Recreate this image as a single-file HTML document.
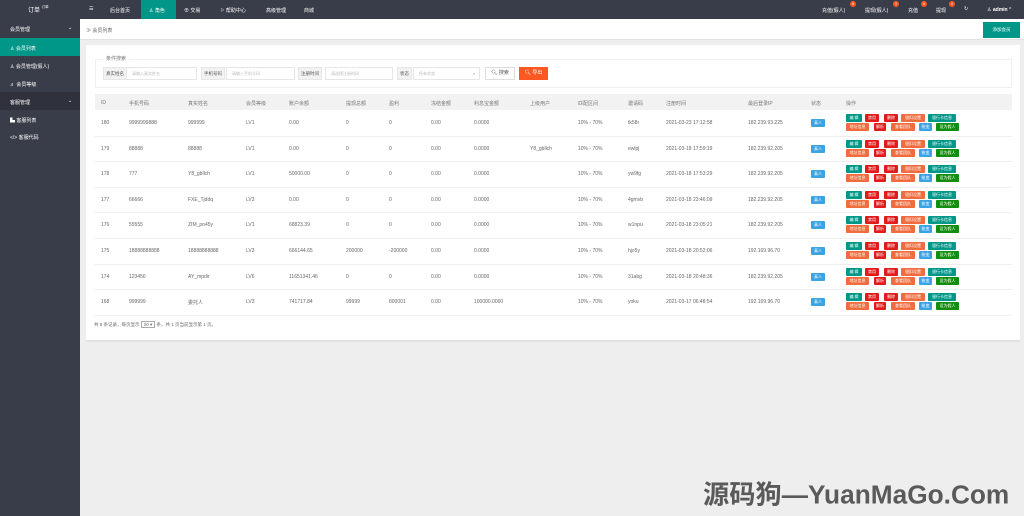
<!DOCTYPE html><html><head><meta charset="utf-8"><style>
*{margin:0;padding:0;box-sizing:border-box}
body{width:1024px;height:516px;overflow:hidden;background:#eeeeee;font-family:"Liberation Sans","Noto Sans CJK SC",sans-serif;font-size:5px;color:#666;position:relative}
.a{position:absolute;white-space:nowrap}
.top{left:0;top:0;width:1024px;height:19px;background:#393d49}
.side{left:0;top:19px;width:80px;height:497px;background:#393d49}
.tw{color:#fff;font-size:5px}
.badge{position:absolute;width:6px;height:6px;border-radius:3px;background:#ff5722;color:#fff;font-size:3.5px;text-align:center;line-height:6px}
.lbl{background:#f2f2f2;border:1px solid #e6e6e6;color:#555;height:13px;line-height:11px;padding:0 2px;font-size:4.5px}
.inp{border:1px solid #e6e6e6;background:#fff;height:13px;line-height:11px;padding-left:5px;color:#bbb;font-size:4px}
.b{position:absolute;height:8px;line-height:8px;color:#fff;font-size:4px;text-align:center;border-radius:1px}
.t{background:#009688}.r{background:#e01b1b}.o{background:#f06b3d}.bl{background:#3ba3e4}.g{background:#108e10}
</style></head><body>
<div class="a top"></div>
<div class="a side"></div>
<div class="a tw" style="left:28px;top:5px;font-size:6px">订单 <span style="font-size:3.5px;vertical-align:top">订单</span></div>
<div class="a tw" style="left:89px;top:6px">☰</div>
<div class="a tw" style="left:110px;top:7px">后台首页</div>
<div class="a" style="left:141px;top:0;width:35px;height:19px;background:#009688"></div>
<div class="a tw" style="left:149px;top:7px">♙ 角色</div>
<div class="a tw" style="left:184px;top:7px">⊕ 交易</div>
<div class="a tw" style="left:220px;top:7px">⚐ 帮助中心</div>
<div class="a tw" style="left:266px;top:7px">高级管理</div>
<div class="a tw" style="left:304px;top:7px">商城</div>
<div class="a tw" style="left:822px;top:7px">充值(假人)</div><div class="badge" style="left:850px;top:1px">0</div>
<div class="a tw" style="left:865px;top:7px">提现(假人)</div><div class="badge" style="left:893px;top:1px">0</div>
<div class="a tw" style="left:908px;top:7px">充值</div><div class="badge" style="left:921px;top:1px">0</div>
<div class="a tw" style="left:936px;top:7px">提现</div><div class="badge" style="left:949px;top:1px">0</div>
<div class="a tw" style="left:964px;top:6px">↻</div>
<div class="a tw" style="left:987px;top:7px">♙ <b>admin</b> ^</div>
<div class="a tw" style="left:10px;top:26px">会员管理</div><div class="a tw" style="left:68px;top:25px">⌄</div>
<div class="a" style="left:0;top:38px;width:80px;height:18px;background:#009688"></div>
<div class="a tw" style="left:10px;top:45px">♙ 会员列表</div>
<div class="a tw" style="left:10px;top:63px">♙ 会员管理(假人)</div>
<div class="a tw" style="left:10px;top:81px">♬ 会员等级</div>
<div class="a" style="left:0;top:92px;width:80px;height:18px;background:#2f323c"></div>
<div class="a tw" style="left:10px;top:99px">客服管理</div><div class="a tw" style="left:68px;top:98px">⌄</div>
<div class="a tw" style="left:10px;top:117px">▙ 客服列表</div>
<div class="a tw" style="left:10px;top:134px">&lt;/&gt; 客服代码</div>
<div class="a" style="left:80px;top:19px;width:944px;height:21px;background:#fff;border-bottom:1px solid #e2e2e2"></div>
<div class="a" style="left:86px;top:27px;color:#666">≫ 会员列表</div>
<div class="a" style="left:983px;top:22px;width:37px;height:16px;background:#009688;color:#fff;text-align:center;line-height:16px;font-size:4.5px">添加会员</div>
<div class="a" style="left:86px;top:45px;width:934px;height:297px;background:#fff;border-bottom:2px solid #e2e2e2"></div>
<div class="a" style="left:95px;top:59px;width:917px;height:29px;border:1px solid #eee"></div>
<div class="a" style="left:103px;top:55px;background:#fff;padding:0 3px;color:#777">条件搜索</div>
<div class="a lbl" style="left:103px;top:67px">真实姓名</div><div class="a inp" style="left:126px;top:67px;width:71px">请输入真实姓名</div>
<div class="a lbl" style="left:201px;top:67px">手机号码</div><div class="a inp" style="left:226px;top:67px;width:69px">请输入手机号码</div>
<div class="a lbl" style="left:298px;top:67px">注册时间</div><div class="a inp" style="left:325px;top:67px;width:68px">请选择注册时间</div>
<div class="a lbl" style="left:397px;top:67px">状态</div><div class="a inp" style="left:413px;top:67px;width:67px">所有状态<span style="position:absolute;right:4px">▾</span></div>
<div class="a" style="left:485px;top:67px;width:30px;height:13px;border:1px solid #ddd;line-height:11px;text-align:center;color:#555">🔍︎ 搜索</div>
<div class="a" style="left:519px;top:67px;width:29px;height:13px;background:#ff5722;color:#fff;line-height:13px;text-align:center">🔍︎ 导出</div>
<div class="a" style="left:95px;top:94px;width:917px;height:16px;background:#f2f2f2"></div>
<div id="tb"></div>
<div class="a" style="left:94px;top:322px;color:#666;font-size:4.5px">共 8 条记录，每页显示 <span style="border:1px solid #aaa;padding:0 2px">20 ▾</span> 条，共 1 页当前显示第 1 页。</div>
<div class="a" style="left:703px;top:474px;font-size:25px;font-weight:bold;color:#5a5a5a;transform-origin:0 0;transform:scale(1.05,1.05)">源码狗—YuanMaGo.Com</div>
<script>
var X=[101,129,188,246,289,346,389,431,474,530,578,628,666,748,811,846];
var H=["ID","手机号码","真实姓名","会员等级","账户余额","提现总额","盈利","冻结金额","利息宝金额","上级用户","匹配区间","邀请码","注册时间","最后登录IP","状态","操作"];
var R=[["180","9999999888","999999","LV1","0.00","0","0","0.00","0.0000","","10% - 70%","tk58r","2021-03-23 17:12:58","182.239.93.225"],
["179","88888","88888","LV1","0.00","0","0","0.00","0.0000","Y8_gbllch","10% - 70%","ewlpj","2021-03-18 17:59:19","182.239.92.205"],
["178","777","Y8_gbllch","LV1","50000.00","0","0","0.00","0.0000","","10% - 70%","yw9fg","2021-03-18 17:53:29","182.239.92.205"],
["177","66666","FXE_Tjddq","LV3","0.00","0","0","0.00","0.0000","","10% - 70%","4gmvb","2021-03-18 23:46:09","182.239.92.205"],
["176","55555","ZIM_po45y","LV1","68823.39","0","0","0.00","0.0000","","10% - 70%","w1npu","2021-03-18 23:05:21","182.239.92.205"],
["175","18888888888","18888888888","LV3","666144.65","200000","-200000","0.00","0.0000","","10% - 70%","hjo5y","2021-03-18 20:52:06","192.169.96.70"],
["174","123456","AY_mpdir","LV6","11651341.46","0","0","0.00","0.0000","","10% - 70%","31abg","2021-03-18 20:48:36","182.239.92.205"],
["168","999999","委托人","LV3","741717.84","99999","800001","0.00","100000.0000","","10% - 70%","yoku","2021-03-17 06:48:54","192.169.96.70"]];
var s="";
H.forEach(function(h,i){s+='<div class="a" style="left:'+X[i]+'px;top:100px;color:#777">'+h+'</div>'});
var B1=[["编 辑","t",846,16],["禁用","r",865,14],["删除","r",884,14],["银扣设置","o",901,24],["银行卡信息","t",928,28]];
var B2=[["地址信息","o",846,23],["解析","r",874,12],["查看团队","o",891,24],["账变","bl",919,13],["设为假人","g",936,23]];
R.forEach(function(r,k){var c=123+k*25.6;
s+='<div class="a" style="left:95px;top:'+(c+12.5)+'px;width:917px;height:1px;background:#eee"></div>';
r.forEach(function(v,i){s+='<div class="a" style="left:'+X[i]+'px;top:'+(c-3)+'px">'+v+'</div>'});
s+='<div class="b bl" style="left:811px;top:'+(c-4)+'px;width:14px">真人</div>';
B1.forEach(function(b){s+='<div class="b '+b[1]+'" style="left:'+b[2]+'px;top:'+(c-9)+'px;width:'+b[3]+'px">'+b[0]+'</div>'});
B2.forEach(function(b){s+='<div class="b '+b[1]+'" style="left:'+b[2]+'px;top:'+(c+0)+'px;width:'+b[3]+'px">'+b[0]+'</div>'});
});
document.getElementById("tb").innerHTML=s;
</script>
</body></html>
